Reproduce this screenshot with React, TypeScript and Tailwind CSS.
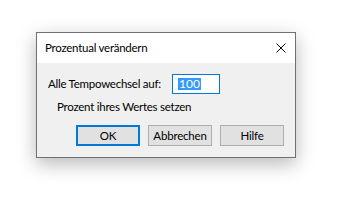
import React from 'react';

const font = { fontFamily: 'Lato, "Liberation Sans", sans-serif' };

const Btn: React.FC<{ label: string; primary?: boolean }> = ({ label, primary }) => (
  <button
    className={`w-[64px] h-[21px] flex items-center justify-center bg-[#e1e1e1] text-[11.5px] tracking-[-0.2px] text-black leading-none ${
      primary ? 'border-2 border-[#0078d7]' : 'border border-[#adadad]'
    }`}
  >
    {label}
  </button>
);

export default function App() {
  return (
    <div className="w-[343px] h-[208px] bg-white pt-[32px] pl-[36px]" style={font}>
      <div className="w-[260px] h-[126px] border border-[#707070] bg-[#f0f0f0] flex flex-col shadow-[0_6px_18px_rgba(0,0,0,0.28)]">
        <div className="h-[30px] bg-white flex items-center justify-between pl-[8px] pr-[9px]">
          <span className="text-[11.5px] tracking-[-0.25px] text-black whitespace-nowrap">Prozentual verändern</span>
          <svg width="10" height="10" viewBox="0 0 10 10">
            <path d="M0.5 0.5 L9.5 9.5 M9.5 0.5 L0.5 9.5" stroke="#000" strokeWidth="1" />
          </svg>
        </div>
        <div className="flex-1 flex flex-col px-[11px] pt-[11px]">
          <div className="flex items-center h-[20px]">
            <span className="w-[124px] text-[11.5px] tracking-[-0.25px] text-black whitespace-nowrap">Alle Tempowechsel auf:</span>
            <div className="w-[48px] h-[20px] border border-[#0078d7] bg-white flex items-center pl-[5px]">
              <span className="bg-[#3399ff] text-white text-[12px] leading-[12px] h-[12px] px-[1px]">100</span>
            </div>
          </div>
          <div className="pl-[9px] mt-[5px] text-[11.5px] tracking-[-0.25px] text-black leading-[16px] whitespace-nowrap">Prozent ihres Wertes setzen</div>
          <div className="flex justify-end gap-[8px] mt-[10px]">
            <Btn label="OK" primary />
            <Btn label="Abbrechen" />
            <Btn label="Hilfe" />
          </div>
        </div>
      </div>
    </div>
  );
}
